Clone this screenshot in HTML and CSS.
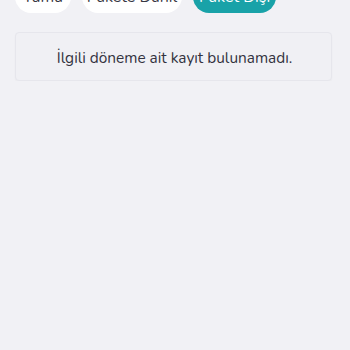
FILE: index.html
```html
<!DOCTYPE html>
<html lang="tr">
<head>
<meta charset="utf-8">
<link rel="stylesheet" href="styles.css">
</head>
<body>
<div class="filters">
  <span class="pill">Tümü</span>
  <span class="pill pill-wide">Pakete Dahil</span>
  <span class="pill pill-active">Paket Dışı</span>
</div>
<div class="card">
  <p class="empty">İlgili döneme ait kayıt bulunamadı.</p>
</div>
</body>
</html>
```
FILE: styles.css
```css
html, body {
  margin: 0;
  padding: 0;
  background: #f1f1f5;
  font-family: "Nunito", Lato, "Noto Sans", sans-serif;
}
.filters {
  display: flex;
  gap: 11px;
  padding: 0 15px;
  margin-top: -19px;
}
.pill {
  display: flex;
  align-items: center;
  justify-content: center;
  height: 32px;
  border-radius: 16px;
  background: #ffffff;
  color: #363642;
  font-size: 16px;
  width: 56px;
  box-sizing: border-box;
}
.pill-wide {
  width: 100px;
}
.pill-active {
  width: 83px;
  background: #19a2a8;
  color: #ffffff;
}
.card {
  margin: 19px 18px 0 15px;
  height: 47px;
  border: 1px solid #e6e6ec;
  border-radius: 4px;
  background: #f0f0f4;
  box-shadow: 0 1px 2px rgba(0,0,0,0.03);
  display: flex;
  align-items: center;
  justify-content: center;
}
.empty {
  margin: 1px 0 0 2px;
  font-size: 15.4px;
  color: #33333f;
}
```
